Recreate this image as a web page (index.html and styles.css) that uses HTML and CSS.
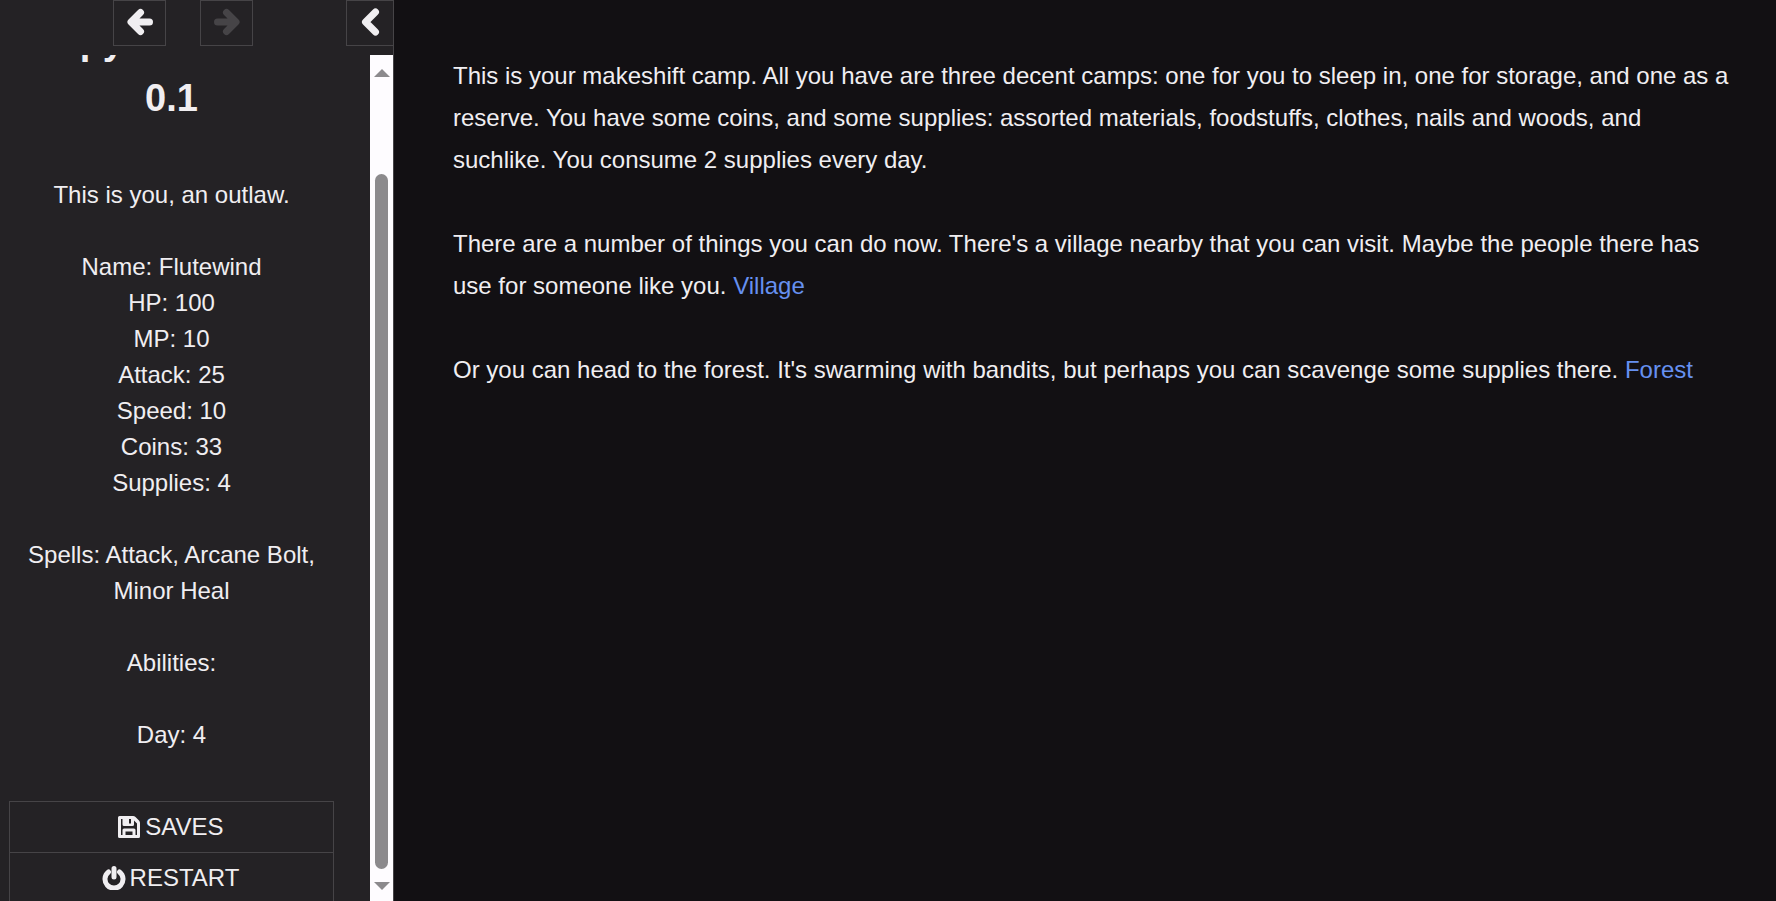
FILE: index.html
```html
<!DOCTYPE html>
<html lang="en">
<head>
  <meta charset="UTF-8">
  <meta name="viewport" content="width=device-width, initial-scale=1.0">
  <title>Spy Survivor 0.1</title>
  <link rel="stylesheet" href="styles.css">
</head>
<body>
  <aside class="ui-bar">
    <div class="tray">
      <button class="tray-btn" aria-label="Go back">
        <svg viewBox="0 0 28 28" width="28" height="28"><path d="M14.500 4.500 5 14l9.500 9.500M6 14h17.500"/></svg>
      </button>
      <button class="tray-btn" aria-label="Go forward" disabled>
        <svg viewBox="0 0 28 28" width="28" height="28"><path d="M13.500 4.500 23 14l-9.500 9.500M22 14H4.500"/></svg>
      </button>
      <button class="tray-btn toggle" aria-label="Toggle the sidebar">
        <svg viewBox="0 0 28 28" width="28" height="28"><path d="M19.500 4 9.500 14l10 10"/></svg>
      </button>
    </div>

    <div class="bar-body">
      <div class="bar-content" id="barContent">
        <h1>Spy Survivor<br>0.1</h1>
        <p>This is you, an outlaw.</p>
        <p>
          Name: Flutewind<br>
          HP: 100<br>
          MP: 10<br>
          Attack: 25<br>
          Speed: 10<br>
          Coins: 33<br>
          Supplies: 4
        </p>
        <p>Spells: Attack, Arcane Bolt, Minor Heal</p>
        <p>Abilities:</p>
        <p>Day: 4</p>

        <nav class="menu">
          <button>
            <svg viewBox="0 0 24 24" width="24" height="24"><path fill-rule="evenodd" d="M2.500 1H16q1.500 0 2.500 1L22 5.500q1 1 1 2.500v13.500q0 1.500-1.500 1.500h-19Q1 23 1 21.500v-19Q1 1 2.500 1zM4 4v16h1.500v-5q0-1.500 1.500-1.500h10q1.500 0 1.500 1.500v5H20V8.500L17 5.500v4q0 1.500-1.500 1.500H7q-1.500 0-1.500-1.500V4zM12 4v4.500h2V4zM8.500 16.500V20h7v-3.500z"/></svg>
            SAVES
          </button>
          <button>
            <svg viewBox="0 0 24 24" width="24" height="24"><path class="stroke" d="M6.500 6a9 9 0 1 0 11 0M12 2.500v8.500"/></svg>
            RESTART
          </button>
        </nav>
      </div>

      <div class="scrollbar">
        <span class="arrow up"></span>
        <span class="thumb"></span>
        <span class="arrow down"></span>
      </div>
    </div>
  </aside>

  <main class="story">
    <p>This is your makeshift camp. All you have are three decent camps: one for you to sleep in, one for storage, and one as a reserve. You have some coins, and some supplies: assorted materials, foodstuffs, clothes, nails and woods, and suchlike. You consume 2 supplies every day.</p>
    <p>There are a number of things you can do now. There's a village nearby that you can visit. Maybe the people there has use for someone like you. <a href="#village">Village</a></p>
    <p>Or you can head to the forest. It's swarming with bandits, but perhaps you can scavenge some supplies there. <a href="#forest">Forest</a></p>
  </main>

  <script>
    document.getElementById("barContent").scrollTop = 105;
  </script>
</body>
</html>
```
FILE: styles.css
```css
* { box-sizing: border-box; }
body {
  margin: 0;
  display: flex;
  height: 100vh;
  overflow: hidden;
  background: #121013;
  color: #f0eef1;
  font: 24px/36px "Liberation Sans", Arial, sans-serif;
}
button {
  background: transparent;
  border: 1px solid #464447;
  color: inherit;
  font: inherit;
  cursor: pointer;
}

/* sidebar */
.ui-bar {
  flex: none;
  width: 394px;
  display: flex;
  flex-direction: column;
  background: #242225;
  border-right: 1px solid #464447;
  text-align: center;
}
.tray {
  display: flex;
  gap: 34px;
  height: 55px;
  padding-left: 113px;
}
.tray-btn {
  display: flex;
  align-items: center;
  justify-content: center;
  width: 53px;
  height: 46px;
  padding: 0 0 2px;
}
.tray-btn svg {
  fill: none;
  stroke: currentColor;
  stroke-width: 7;
  stroke-linecap: round;
  stroke-linejoin: round;
}
.tray-btn:disabled { color: #464447; cursor: default; }
.tray-btn.toggle {
  width: 47px;
  margin-left: auto;
  border-right: none;
}

.bar-body {
  flex: 1;
  display: flex;
  min-height: 0;
}
.bar-content {
  flex: 1;
  padding: 63px 36px 0 9px;
  overflow-y: auto;
  scrollbar-width: none;
}
.bar-content h1 {
  margin: 0 0 50px;
  font-size: 38px;
  line-height: 57px;
}
.bar-content p { margin: 0 0 36px; }

.menu {
  margin-top: 48px;
  padding-bottom: 8px;
}
.menu button {
  display: flex;
  align-items: center;
  justify-content: center;
  gap: 4px;
  width: 100%;
  height: 52px;
  padding: 0 2px 0 0;
}
.menu button + button { margin-top: -1px; }
.menu svg { fill: currentColor; }
.menu .stroke {
  fill: none;
  stroke: currentColor;
  stroke-width: 5;
  stroke-linecap: round;
}

.scrollbar {
  display: flex;
  flex-direction: column;
  align-items: center;
  width: 23px;
  padding: 14px 0 11px;
  background: #fefcff;
}
.arrow {
  border: 8px solid transparent;
  border-top-width: 0;
  border-bottom-width: 0;
}
.arrow.up { border-bottom: 8px solid #8c8a8d; }
.arrow.down { border-top: 8px solid #8c8a8d; }
.thumb {
  flex: 1;
  width: 13px;
  margin: 97px 0 13px;
  border-radius: 7px;
  background: #8c8a8d;
}

/* passage */
.story {
  flex: 1;
  padding: 55px 38px 55px 59px;
  line-height: 42px;
}
.story p { margin: 0 0 42px; }
.story a { color: #6690f0; text-decoration: none; }
.story a:hover { text-decoration: underline; }
```
